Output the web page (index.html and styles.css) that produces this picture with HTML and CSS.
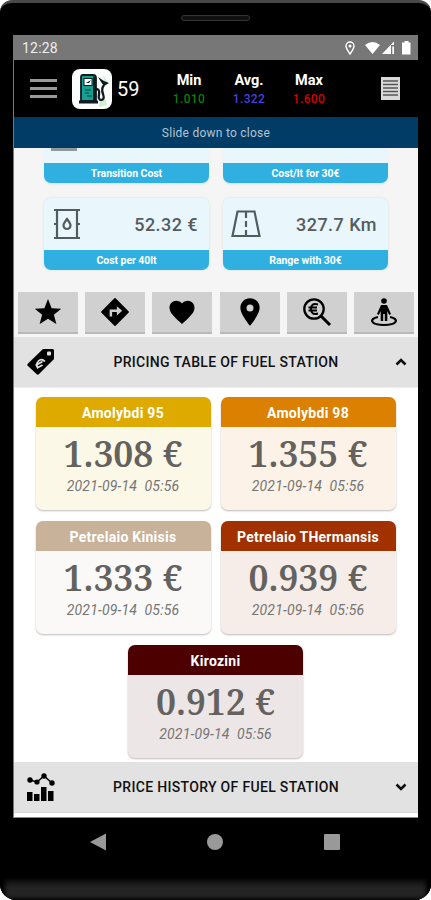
FILE: index.html
```html
<!DOCTYPE html>
<html lang="en">
<head>
<meta charset="utf-8">
<title>Fuel station</title>
<link rel="stylesheet" href="styles.css">
</head>
<body>
<div class="phone">
  <div class="bezel-top"><span class="speaker"></span></div>
  <div class="screen">
    <div class="status">
      <span class="clock">12:28</span>
      <svg class="status-icons" width="68" height="16" viewBox="0 0 68 16">
        <path d="M6 14C3.500 10.500 2 8.300 2 6a4 4 0 0 1 8 0C10 8.300 8.500 10.500 6 14Z" fill="none" stroke="#fff" stroke-width="1.400"/>
        <circle cx="6" cy="6" r="1.500" fill="#fff"/>
        <path d="M21 5Q28.500-1 36 5L28.500 14Z M38 14L50 1.500V5H47V14Z M48.300 6.500H50V14H48.300Z" fill="#fff"/>
        <path d="M59 2.500H60.500V1H64.500V2.500H66.500V14.500H58V2.500Z" fill="#fff"/>
      </svg>
    </div>
    <header class="header">
      <div class="menu"><i></i><i></i><i></i></div>
      <svg class="logo" width="40" height="40" viewBox="0 0 40 40">
        <rect width="40" height="40" rx="8" fill="#fafdfb"/>
        <path d="M27 34L32 25L35 36L27 38ZM31 6L36 13L33 18Z" fill="#d3efd3"/>
        <path d="M9 32V8Q9 6 11 6H21Q24 6 24 9V32Z" fill="#16a092" stroke="#101b20" stroke-width="1.800"/>
        <path d="M21 7V32H24V9Z" fill="#101b20"/>
        <rect x="12" y="9.500" width="8" height="7" fill="#fff" stroke="#101b20"/>
        <path d="M14 14L19 11L17 14Z" fill="#101b20"/>
        <path d="M13 21H19M13 24H17M15 27H20" stroke="#08695f" stroke-width="1.300"/>
        <path d="M7 33H26" stroke="#101b20" stroke-width="3"/>
        <path d="M24 20Q28 20 27 25Q26 31 29 31Q33 31 31 25Q29 20 32 16" fill="none" stroke="#101b20" stroke-width="2.300"/>
        <path d="M26 8L32 12L37 14L32 17L29 13Z" fill="#101b20"/>
      </svg>
      <span class="count">59</span>
      <div class="figures">
        <div><b>Min</b><span class="green">1.010</span></div>
        <div><b>Avg.</b><span class="blue">1.322</span></div>
        <div><b>Max</b><span class="red">1.600</span></div>
      </div>
      <svg class="list" width="19" height="23" viewBox="0 0 19 23">
        <rect width="19" height="23" fill="#d9d9d9"/>
        <path d="M2 4H17M2 7.500H17M2 11H17M2 14.500H17M2 18H17" stroke="#555" stroke-width="1.300"/>
      </svg>
    </header>
    <div class="slide">Slide down to close</div>
    <main class="content">
      <section class="stats">
        <div class="stat clipped"><div class="stat-body"><i class="cut"></i></div><div class="stat-label">Transition Cost</div></div>
        <div class="stat clipped"><div class="stat-body"></div><div class="stat-label">Cost/lt for 30€</div></div>
        <div class="stat">
          <div class="stat-body">
            <svg width="28" height="32" viewBox="0 0 28 32" fill="none" stroke="#525b60" stroke-width="2.200">
              <path d="M1 2H27M1 30H27M4 2V30M24 2V30M1 16H4M24 16H27"/>
              <path d="M14 11Q10.500 15.500 10.500 17.500A3.500 3.500 0 0 0 17.500 17.500Q17.500 15.500 14 11Z"/>
            </svg>
            <span>52.32 €</span>
          </div>
          <div class="stat-label">Cost per 40lt</div>
        </div>
        <div class="stat">
          <div class="stat-body">
            <svg class="road" width="30" height="28" viewBox="0 0 30 28" fill="none" stroke="#525b60" stroke-width="2.200">
              <path d="M6.500 1.500H23.500L28.500 26H1.500Z"/>
              <path d="M15 2V8M15 11V17M15 20V26"/>
            </svg>
            <span>327.7 Km</span>
          </div>
          <div class="stat-label">Range with 30€</div>
        </div>
      </section>
      <nav class="actions">
        <div class="action"><svg width="30" height="30" viewBox="0 0 24 24"><path d="M12 1.600L14.900 8.900L22.600 9.300L16.700 14.200L18.700 21.600L12 17.400L5.300 21.600L7.300 14.200L1.400 9.300L9.100 8.900Z"/></svg></div>
        <div class="action"><svg width="30" height="30" viewBox="0 0 24 24"><path d="M12 1.500L22.500 12L12 22.500L1.500 12Z" stroke="#000" stroke-width="1.400" stroke-linejoin="round"/><path d="M8.700 15.500V11H14" fill="none" stroke="#d0d0d0" stroke-width="2"/><path d="M13.500 7.300L17.700 11L13.500 14.700Z" fill="#d0d0d0"/></svg></div>
        <div class="action"><svg width="30" height="30" viewBox="0 0 24 24"><path d="M12 21.500L10.500 20.100C5.400 15.400 2 12.300 2 8.500 2 5.400 4.400 3 7.500 3c1.700 0 3.400.8 4.500 2.100C13.100 3.800 14.800 3 16.500 3 19.600 3 22 5.400 22 8.500c0 3.800-3.400 6.900-8.500 11.600Z"/></svg></div>
        <div class="action"><svg width="30" height="30" viewBox="0 0 24 24"><path fill-rule="evenodd" d="M12 1C7.600 1 4.300 4.300 4.300 8.600 4.300 14 12 23 12 23S19.700 14 19.700 8.600C19.700 4.300 16.400 1 12 1ZM12 6a2.800 2.800 0 1 1 0 5.600A2.800 2.800 0 0 1 12 6Z"/></svg></div>
        <div class="action"><svg width="30" height="30" viewBox="0 0 30 30" fill="none" stroke="#000"><circle cx="12" cy="12" r="9.700" stroke-width="2.300"/><path d="M19 19L28 28" stroke-width="3"/><path d="M16 7.500Q9 5.500 9 12Q9 18.500 16 16.500M6.500 10.500H15M6.500 13.500H15" stroke-width="1.900"/></svg></div>
        <div class="action"><svg width="30" height="30" viewBox="0 0 30 30"><circle cx="15" cy="4" r="2.800"/><path d="M12 8H18L22 17L20.200 18L18.300 14V24H15.800V17H14.200V24H11.700V14L9.800 18L8 17Z"/><path d="M9 20C-1 22 2 28 15 28S31 22 21 20" fill="none" stroke="#000" stroke-width="2.200"/></svg></div>
      </nav>
      <div class="bar first">
        <svg width="28" height="28" viewBox="0 0 28 28"><path d="M16 1H26L27 2V11L12 26Q11 27.500 9.500 26L1 18Q-.5 17 1 15.500Z"/><rect x="20" y="3.500" width="4" height="4" rx="1" fill="#e2e2e2"/><path d="M18 13.500Q14.500 10 11.500 13Q8.500 16.500 11 20.500M8.500 17.500L15.500 13.500M10 20L15.500 17" fill="none" stroke="#e2e2e2" stroke-width="1.700"/></svg>
        <span>PRICING TABLE OF FUEL STATION</span>
        <svg class="chevron" width="12" height="8" viewBox="0 0 12 8"><path d="M1.500 6.500L6 2L10.500 6.500"/></svg>
      </div>
      <section class="prices">
        <article class="card f95"><h2>Amolybdi 95</h2><div class="price"><span>1.308 €</span></div><time>2021-09-14&nbsp; 05:56</time></article>
        <article class="card f98"><h2>Amolybdi 98</h2><div class="price"><span>1.355 €</span></div><time>2021-09-14&nbsp; 05:56</time></article>
        <article class="card kin"><h2>Petrelaio Kinisis</h2><div class="price"><span>1.333 €</span></div><time>2021-09-14&nbsp; 05:56</time></article>
        <article class="card therm"><h2>Petrelaio THermansis</h2><div class="price"><span>0.939 €</span></div><time>2021-09-14&nbsp; 05:56</time></article>
        <article class="card kir"><h2>Kirozini</h2><div class="price"><span>0.912 €</span></div><time>2021-09-14&nbsp; 05:56</time></article>
      </section>
      <div class="bar">
        <svg width="28" height="28" viewBox="0 0 28 28"><path d="M0 19H5.500V28H0ZM7 21H12.500V28H7ZM14 14H19.500V28H14ZM21 18H26.500V28H21Z"/><circle cx="3" cy="7" r="2.700"/><circle cx="10" cy="9" r="2.600"/><circle cx="17" cy="3" r="2.700"/><circle cx="25" cy="10" r="2.700"/><path d="M3 7L10 9L17 3L25 10" fill="none" stroke="#000" stroke-width="1.500"/></svg>
        <span>PRICE HISTORY OF FUEL STATION</span>
        <svg class="chevron" width="12" height="8" viewBox="0 0 12 8"><path d="M1.500 1.500L6 6L10.500 1.500"/></svg>
      </div>
    </main>
  </div>
  <div class="nav">
    <svg width="16" height="18" viewBox="0 0 16 18"><path d="M0 9L16 0.500V17.500Z"/></svg>
    <svg width="16" height="16" viewBox="0 0 16 16"><circle cx="8" cy="8" r="8"/></svg>
    <svg width="16" height="16" viewBox="0 0 16 16"><rect width="16" height="16" rx="1"/></svg>
  </div>
  <div class="chin"></div>
</div>
</body>
</html>
```

FILE: styles.css
```css
* { box-sizing: border-box; }
body { margin: 0; background: #fff; font-family: Roboto, "Liberation Sans", sans-serif; }
svg { display: block; flex: none; }
.phone { width: 431px; height: 900px; background: #000; border-top: 3px solid #484848; border-radius: 12px 12px 16px 16px; overflow: hidden; display: flex; flex-direction: column; }
.bezel-top { height: 32px; display: flex; justify-content: center; padding-top: 12px; }
.speaker { width: 69px; height: 6px; border: 1px solid #333; border-radius: 3px; background: #111; }
.screen { width: 405px; margin-left: 13px; height: 783px; border-left: 1px solid #777; }
.status { height: 25px; background: #777; display: flex; align-items: center; justify-content: space-between; padding: 0 5px 0 8px; color: #eee; }
.clock { font-size: 14px; font-weight: 400; line-height: 25px; padding-top: 1px; letter-spacing: .2px; }
.status-icons { margin-right: 1px; }
.header { height: 57px; display: flex; align-items: center; padding-left: 16px; color: #fff; }
.menu { width: 27px; display: flex; flex-direction: column; gap: 5px; }
.menu i { height: 3px; background: #999; }
.logo { margin-left: 15px; }
.count { width: 34px; margin-left: 5px; font-size: 20px; padding-top: 1px; }
.figures { display: flex; width: 180px; margin-left: 8px; padding-top: 3px; }
.figures div { width: 60px; display: flex; flex-direction: column; align-items: center; line-height: 18px; }
.figures b { font-size: 14.500px; font-weight: 700; }
.figures span { font-size: 12px; font-weight: 500; letter-spacing: .4px; }
.green { color: #087d08; }
.blue { color: #4540df; }
.red { color: #d50000; }
.list { margin-left: 42px; }
.slide { height: 31px; background: #003c66; color: #b5c3d4; font-size: 12px; font-weight: 400; line-height: 33px; text-align: center; letter-spacing: .25px; }
.content { height: 670px; background: #fff; border-bottom: 1px solid #888; }
.stats { height: 140px; background: #f5f5f5; display: grid; grid-template-columns: 165px 165px; grid-template-rows: 35px 72px; column-gap: 14px; row-gap: 15px; padding-left: 30px; }
.stat { background: #e9f7fd; border-radius: 7px; box-shadow: 0 0 3px #d9dfe1; overflow: hidden; display: flex; flex-direction: column; }
.stat.clipped { border-radius: 0 0 7px 7px; box-shadow: 0 2px 3px -1px #d9dfe1; }
.stat-body { flex: 1; display: flex; align-items: center; justify-content: space-between; padding: 0 11px 0 9px; color: #555b5f; font-size: 18px; font-weight: 500; letter-spacing: .45px; }
.stat-body .road { margin-left: -1px; }
.cut { align-self: flex-start; width: 26px; height: 3px; margin-left: -2px; background: #8d999e; }
.stat-label { height: 20px; background: #30b0e0; color: #fff; font-size: 10.500px; font-weight: 700; line-height: 21px; text-align: center; letter-spacing: -.05px; }
.actions { height: 49px; padding: 4px 4px 0; background: #f5f5f5; display: flex; justify-content: space-between; }
.action { width: 60px; height: 42px; background: #d0d0d0; border-bottom: 2px solid #b9b9b9; display: flex; align-items: center; justify-content: center; }
.bar { height: 51px; background: #e2e2e2; display: grid; grid-template-columns: 28px 1fr 12px; align-items: center; padding: 0 11px 0 13px; color: #111; font-size: 14px; font-weight: 500; letter-spacing: .32px; border-bottom: 1px solid #d7d7d7; }
.bar.first { border-bottom-color: #eee; }
.bar span { text-align: center; padding: 0 0 1px 2px; }
.chevron path { fill: none; stroke: #111; stroke-width: 2.600; }
.prices { height: 374px; display: flex; flex-wrap: wrap; justify-content: center; align-content: flex-start; gap: 11px 10px; padding-top: 9px; padding-right: 1px; }
.card { width: 175px; height: 113px; border-radius: 7px; overflow: hidden; box-shadow: 0 1px 2px #bbb; text-align: center; color: #666; }
.card h2 { margin: 0; height: 30px; color: #fff; font-size: 14px; line-height: 32px; font-weight: 700; letter-spacing: .27px; }
.price { height: 51px; display: flex; justify-content: center; align-items: center; font-family: "Noto Serif", "DejaVu Serif Condensed", "DejaVu Serif", serif; font-size: 35.500px; font-weight: 600; white-space: nowrap; color: #64625f; }
.card time { display: block; font-size: 14px; font-style: italic; line-height: 16px; letter-spacing: .2px; font-weight: 400; color: #757575; }
.f95 { background: #fcf8e8; } .f95 h2 { background: #dfaa00; }
.f98 { background: #fcf2e7; } .f98 h2 { background: #db8000; }
.kin { background: #faf9f7; } .kin h2 { background: #c8b299; }
.therm { background: #f6ece8; } .therm h2 { background: #a23100; }
.kir { background: #ede6e7; } .kir h2 { background: #4c0000; }
.nav { height: 60px; display: flex; align-items: center; justify-content: space-between; padding: 0 91px 12px 90px; fill: #999; }
.chin { height: 22px; background: linear-gradient(#0a0a0a, #242424 45%, #242424); box-shadow: inset 5px -1px 4px #000, inset -5px 0 4px #000; }
```
